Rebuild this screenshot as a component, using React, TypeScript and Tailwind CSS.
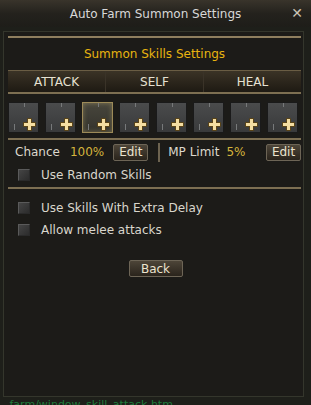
const font = { fontFamily: '"DejaVu Sans", Tahoma, sans-serif' };

function Slot({ active }: { active?: boolean }) {
  return (
    <div
      className={`relative h-[31px] w-[31px] ${
        active
          ? "border border-[#9c8a58] bg-gradient-to-b from-[#48463c] to-[#34332d] shadow-[inset_0_0_5px_rgba(210,190,120,0.4)]"
          : "border border-[#1a1a1a] bg-gradient-to-b from-[#4a4b4c] to-[#393a3b]"
      }`}
    >
      <div className="absolute left-1/2 top-0 h-[4px] w-[1px] bg-[#77797a]" />
      <div className="absolute bottom-[2px] left-[5px] h-[6px] w-[1px] bg-[#77797a]" />
      <div className="absolute bottom-[1px] right-[2px] flex h-[13px] w-[13px] items-center justify-center">
        <div className="absolute h-[5px] w-[13px] rounded-[1px] bg-[#5a4418]" />
        <div className="absolute h-[13px] w-[5px] rounded-[1px] bg-[#5a4418]" />
        <div className="absolute h-[3px] w-[11px] bg-[#f5dea2]" />
        <div className="absolute h-[11px] w-[3px] bg-[#f5dea2]" />
      </div>
    </div>
  );
}

function Btn({ children, w }: { children: string; w: string }) {
  return (
    <div
      className={`${w} flex h-[17px] items-center justify-center rounded-[2px] border border-[#6d6556] bg-gradient-to-b from-[#4d4538] to-[#2a241c] text-[12px] text-[#ece4cf]`}
    >
      {children}
    </div>
  );
}

function Check({ label }: { label: string }) {
  return (
    <div className="flex h-[22px] items-center pl-[10px]">
      <div className="h-[12px] w-[12px] border border-[#5a5a5a] border-r-[#2a2a2a] border-b-[#2a2a2a] bg-gradient-to-br from-[#454545] to-[#2c2c2c]" />
      <span className="ml-[11px] text-[12px] text-[#d9d6cc]">{label}</span>
    </div>
  );
}

export default function App() {
  return (
    <div className="h-[405px] w-[311px] overflow-hidden bg-[#1e1f1a]" style={font}>
      <div className="flex h-[27px] items-center bg-gradient-to-b from-[#39342b] via-[#24221d] to-[#1e1d19]">
        <div className="flex-1 pl-[34px] text-center text-[12px] text-[#d8d8d8]">
          Auto Farm Summon Settings
        </div>
        <div className="w-[34px] pl-[6px] text-center text-[14px] font-bold text-[#c9c3b4]">✕</div>
      </div>
      <div className="ml-[3px] mt-[4px] h-[366px] w-[301px] border border-[#34362c] bg-[#1c1b18] pl-[4px] pr-[2px] pt-[4px]">
        <div className="h-[2px] bg-[#8f7f5f]" />
        <div className="flex h-[32px] items-center justify-center text-[12px] text-[#e8b410]">
          Summon Skills Settings
        </div>
        <div className="flex h-[22px] border-t border-[#6a5d44] bg-gradient-to-b from-[#3b3326] to-[#1e1a13] text-[12px] text-[#e6e1d2]">
          <div className="flex flex-1 items-center justify-center border-r border-[#3a3328]">ATTACK</div>
          <div className="flex flex-1 items-center justify-center border-r border-[#3a3328]">SELF</div>
          <div className="flex flex-1 items-center justify-center">HEAL</div>
        </div>
        <div className="h-[2px] bg-[#7d6f52]" />
        <div className="flex gap-[6px] pt-[8px]">
          <Slot />
          <Slot />
          <Slot active />
          <Slot />
          <Slot />
          <Slot />
          <Slot />
          <Slot />
        </div>
        <div className="mt-[5px] h-[2px] bg-[#7d6f52]" />
        <div className="flex h-[24px] items-center pl-[7px] text-[12px]">
          <span className="text-[#dcd8cc]">Chance</span>
          <span className="ml-[10px] text-[#d4b43c]">100%</span>
          <div className="ml-[9px]">
            <Btn w="w-[35px]">Edit</Btn>
          </div>
          <div className="ml-[10px] h-[19px] w-[2px] bg-[#6d6350]" />
          <span className="ml-[8px] text-[#dcd8cc]">MP Limit</span>
          <span className="ml-[7px] text-[#d4b43c]">5%</span>
          <div className="ml-auto">
            <Btn w="w-[35px]">Edit</Btn>
          </div>
        </div>
        <Check label="Use Random Skills" />
        <div className="mt-[1px] h-[2px] bg-[#7d6f52]" />
        <div className="pt-[8px]">
          <Check label="Use Skills With Extra Delay" />
          <Check label="Allow melee attacks" />
        </div>
        <div className="flex justify-center pl-[2px] pt-[19px]">
          <Btn w="w-[54px]">Back</Btn>
        </div>
      </div>
      <div className="mt-[2px] pl-[4px] text-[11px] leading-[12px] text-[#1e7a3a]">
        _farm/window_skill_attack.htm
      </div>
    </div>
  );
}
